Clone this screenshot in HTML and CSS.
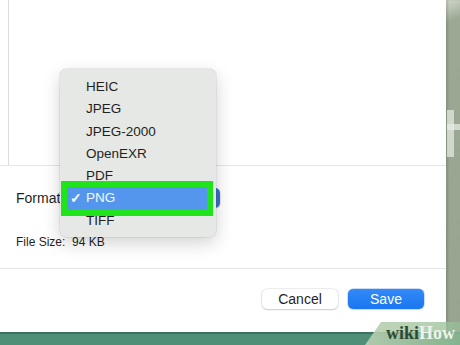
FILE: index.html
```html
<!DOCTYPE html>
<html lang="en">

<head>
  <meta charset="UTF-8">
  <title>Export</title>
  <link rel="stylesheet" href="styles.css">
</head>

<body>
  <div class="screen">
    <div class="dialog">
      <!-- image preview area -->
      <div class="preview">
        <div class="preview-pane"></div>
      </div>

      <!-- export options -->
      <div class="options">
        <div class="format-row">
          <span class="label">Format</span>
          <div class="select">
            <span class="select-arrow"></span>
          </div>
        </div>
        <div class="file-size">File Size:  94 KB</div>
      </div>

      <div class="footer">
        <button class="btn">Cancel</button>
        <button class="btn btn-primary">Save</button>
      </div>

      <!-- open format menu -->
      <ul class="menu">
        <li>HEIC</li>
        <li>JPEG</li>
        <li>JPEG-2000</li>
        <li>OpenEXR</li>
        <li>PDF</li>
        <li class="selected"><span class="check">✓</span>PNG</li>
        <li>TIFF</li>
      </ul>
    </div>

    <!-- desktop behind the dialog -->
    <div class="side">
      <span class="side-glyph"></span>
    </div>

    <div class="dock"></div>
  </div>

  <div class="logo">
    <span class="logo-wiki">wiki</span><span class="logo-how">How</span>
  </div>
</body>

</html>
```

FILE: styles.css
```css
html,
body {
  margin: 0;
  width: 460px;
  height: 345px;
  overflow: hidden;
  font-family: "Liberation Sans", Arial, sans-serif;
  color: #1f1f1f;
}

body {
  position: relative;
}

.screen {
  display: grid;
  grid-template-columns: 446px 14px;
  grid-template-rows: 332px 13px;
  height: 345px;
  background: #98a692;
}

.dialog {
  position: relative;
  display: flex;
  flex-direction: column;
  background: #fff;
}

.preview {
  height: 165px;
  padding-left: 8px;
  border-bottom: 1px solid #e6e6e6;
}

.preview-pane {
  height: 100%;
  border-left: 1px solid #dcdcdc;
}

.options {
  height: 103px;
  padding: 21px 0 0 16px;
  box-sizing: border-box;
  border-bottom: 1px solid #e6e6e6;
}

.format-row {
  display: flex;
  align-items: center;
  height: 22px;
}

.label {
  font-size: 14px;
  width: 44px;
}

.select {
  display: flex;
  justify-content: flex-end;
  width: 160px;
  height: 20px;
  border-radius: 5px;
  background: #fff;
  box-shadow: 0 0 0 0.5px rgba(0, 0, 0, 0.2);
}

.select-arrow {
  width: 16px;
  height: 20px;
  border-radius: 0 5px 5px 0;
  background: #3a6fd0;
}

.file-size {
  margin-top: 26px;
  font-size: 12px;
  white-space: pre;
}

.footer {
  flex: 1;
  display: flex;
  justify-content: flex-end;
  align-items: flex-start;
  gap: 10px;
  padding: 20px 22px 0 0;
}

.btn {
  width: 76px;
  height: 20px;
  padding: 0;
  border: none;
  border-radius: 5px;
  background: #fff;
  font-family: "Liberation Sans", Arial, sans-serif;
  font-size: 14px;
  color: #1f1f1f;
  box-shadow: 0 0 0 0.5px rgba(0, 0, 0, 0.14), 0 1px 2px rgba(0, 0, 0, 0.14);
}

.btn-primary {
  background: linear-gradient(#3389f7, #1a76f1);
  color: #fff;
  box-shadow: 0 0 0 0.5px rgba(0, 80, 200, 0.4);
}

.menu {
  position: absolute;
  left: 60px;
  top: 69px;
  width: 156px;
  margin: 0;
  padding: 7px 0 5px;
  list-style: none;
  background: #e5e8e4;
  border-radius: 6px;
  box-shadow: 0 0 0 0.5px rgba(0, 0, 0, 0.12), 0 6px 18px rgba(0, 0, 0, 0.18);
  font-size: 13.5px;
}

.menu li {
  height: 22.3px;
  line-height: 22.3px;
  margin: 0 9px 0 7px;
  padding-left: 19px;
  position: relative;
}

.menu .selected {
  background: #5496ee;
  color: #f4f8ff;
  box-shadow: 0 0 0 6px #1fe41c;
}

.check {
  position: absolute;
  left: 3px;
  font-size: 14px;
  font-weight: bold;
}

.side {
  position: relative;
  overflow: hidden;
  background: linear-gradient(160deg, #cfd6cb 0, #9aa894 22px, #96a490 100%);
  box-shadow: inset 2px 0 2px rgba(0, 0, 0, 0.12);
}

/* fragment of a large light letter on the wallpaper */
.side-glyph {
  position: absolute;
  left: 1px;
  top: 110px;
  width: 7px;
  height: 47px;
  background: rgba(232, 238, 229, 0.7);
  filter: blur(0.6px);
}

.side-glyph::after {
  content: '';
  position: absolute;
  left: 0;
  top: 14px;
  width: 13px;
  height: 6px;
  background: rgba(232, 238, 229, 0.7);
}

.dock {
  grid-column: 1 / 3;
  background: #4f8f78;
  border-top: 2px solid #3f6f5f;
}

.logo {
  position: absolute;
  right: 0;
  bottom: 0;
  width: 95px;
  height: 23px;
  padding-right: 5px;
  box-sizing: border-box;
  display: flex;
  justify-content: flex-end;
  align-items: center;
  background: linear-gradient(90deg, rgba(185, 208, 178, 0.9), rgba(150, 190, 150, 0.75));
  clip-path: polygon(16px 0, 100% 0, 100% 100%, 0 100%);
  font-family: "Liberation Serif", "Times New Roman", serif;
  font-weight: bold;
  font-size: 18px;
}

.logo-wiki {
  color: #2e4a33;
}

.logo-how {
  color: #eef3ec;
}
```
